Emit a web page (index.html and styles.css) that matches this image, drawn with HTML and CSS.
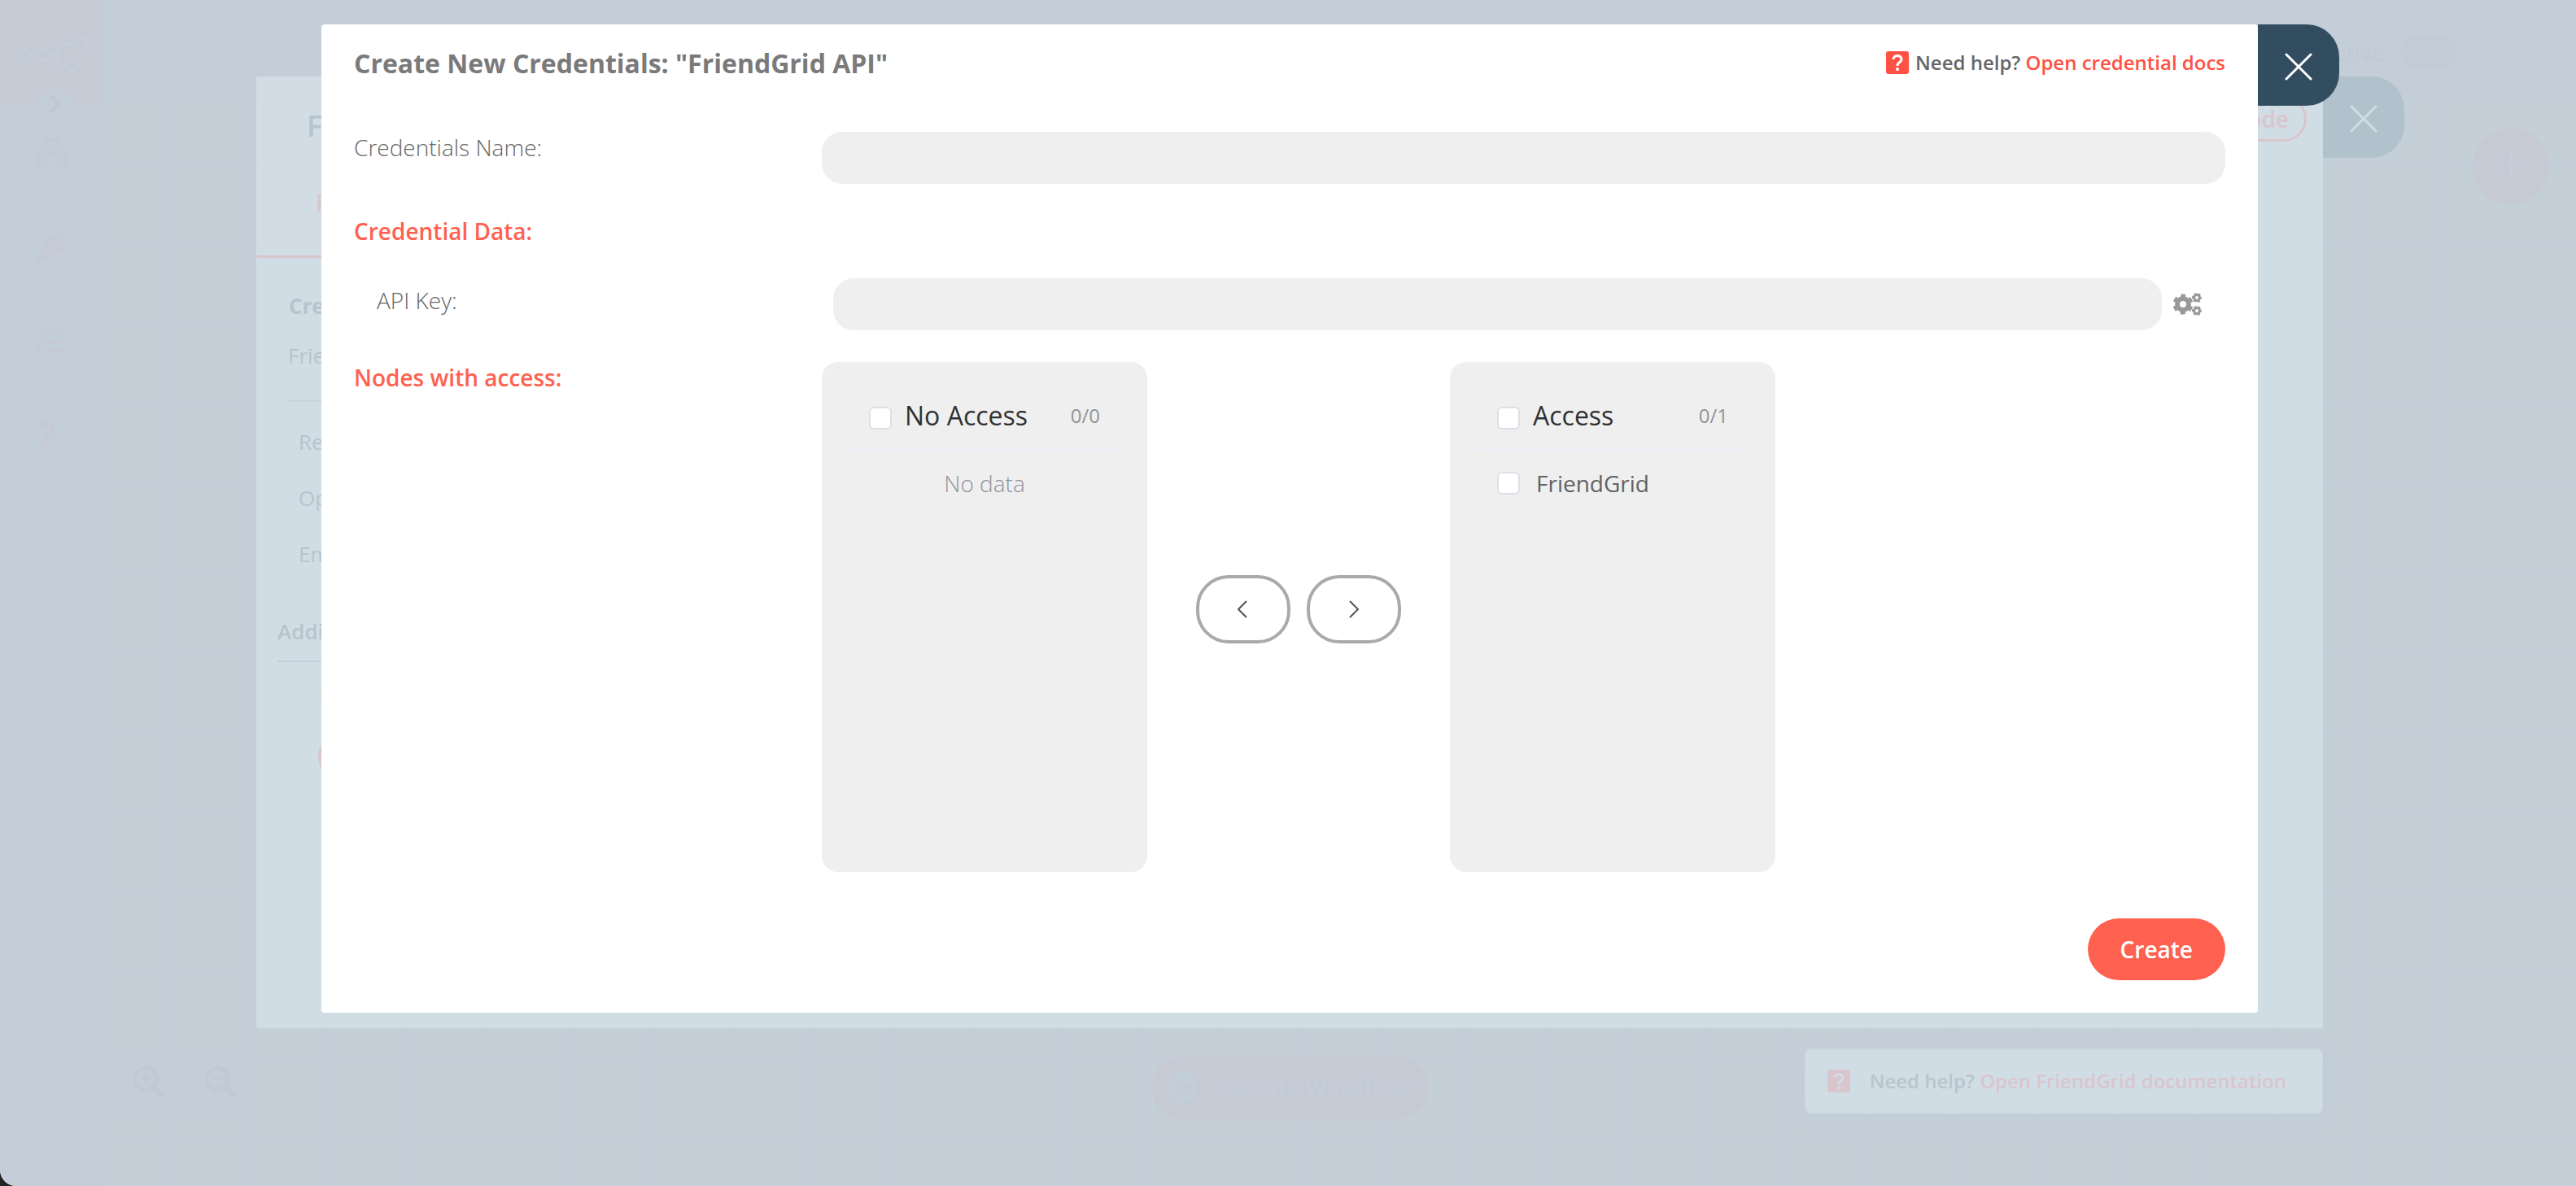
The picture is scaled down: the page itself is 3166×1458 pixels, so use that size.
FILE: index.html
```html
<!DOCTYPE html>
<html lang="en">
<head>
<meta charset="utf-8">
<meta name="viewport" content="width=device-width, initial-scale=1">
<title>Create New Credentials</title>
<link rel="stylesheet" href="styles.css">
</head>
<body>
<div class="app">
  <nav class="sidebar" aria-label="Main menu">
    <div class="brand">
      <svg class="brand-logo" viewBox="0 0 90 46" aria-hidden="true">
        <g fill="none" stroke="currentColor" stroke-width="5">
          <circle cx="9.500" cy="23" r="7"/><circle cx="35" cy="23" r="7"/><circle cx="81" cy="9.500" r="7"/><circle cx="71" cy="36.500" r="7"/>
          <path d="M17 23h11M43 23h4c10 0 4-13.500 15-13.500h12M47 23c10 0 4 13.500 13 13.500h4"/>
        </g>
      </svg>
    </div>
    <button class="collapse" type="button" aria-label="Expand menu">
      <svg width="16" height="22" viewBox="0 0 16 22" aria-hidden="true"><path d="M4 3l8 8-8 8" fill="none" stroke="currentColor" stroke-width="5" stroke-linecap="round"/></svg>
    </button>
    <ul class="menu">
      <li><a href="#workflows" aria-label="Workflows"><svg width="42" height="34" viewBox="0 0 42 34" aria-hidden="true"><g fill="none" stroke="currentColor" stroke-width="4"><path d="M14 2h12v8H14zM3 24h10v8H3zM27 24h10v8H27z"/><path d="M0 17.500h42M21 11v7M9 17v6M31 17v6" stroke-width="3"/></g></svg></a></li>
      <li><a href="#credentials" aria-label="Credentials"><svg width="34" height="34" viewBox="0 0 512 512" aria-hidden="true"><path fill="currentColor" d="M512 176c0 97-79 176-176 176-11 0-22-1-32-3l-24 27c-5 5-11 8-18 8h-38v40c0 13-11 24-24 24h-40v40c0 13-11 24-24 24H24c-13 0-24-11-24-24v-78c0-6 3-12 7-17l162-162c-6-17-9-36-9-55C160 79 239 0 336 0s176 79 176 176zM336 128a48 48 0 1 0 96 0 48 48 0 1 0-96 0z"/></svg></a></li>
      <li><a href="#executions" aria-label="Executions"><svg width="34" height="28" viewBox="0 0 34 28" aria-hidden="true"><g fill="none" stroke="currentColor" stroke-width="4"><path d="M13 4h20M13 14.500h20M13 25h20"/><path d="M1 3l3 3 5-6M1 14l3 3 5-6" stroke-width="3"/></g><circle cx="4" cy="25" r="3" fill="currentColor"/></svg></a></li>
      <li><a href="#help" aria-label="Help"><svg width="24" height="34" viewBox="0 0 24 34" aria-hidden="true"><path d="M3 8c3-4 6-5 9-5 9 0 10 8 5 12-3 2-5 3-6 7" fill="none" stroke="currentColor" stroke-width="6"/><circle cx="11" cy="29" r="4.500" fill="currentColor"/></svg></a></li>
    </ul>
  </nav>
  <header class="topbar">
    <label class="active-label" for="active">Active:</label>
    <input class="switch" type="checkbox" id="active">
  </header>
  <main class="canvas">
    <button class="add-node" type="button" aria-label="Add node">
      <svg width="36" height="36" viewBox="0 0 36 36" aria-hidden="true"><path d="M18 0v36M0 18h36" stroke="currentColor" stroke-width="2"/></svg>
    </button>
    <div class="canvas-bar">
      <div class="zoom-tools">
        <button class="tool" type="button" aria-label="Zoom in"><svg width="40" height="40" viewBox="0 0 40 40" aria-hidden="true"><g fill="none" stroke="currentColor"><circle cx="16" cy="16" r="13" stroke-width="5"/><path d="M25 26l12 11" stroke-width="6"/><path d="M16 9v14M9 16h14" stroke-width="4"/></g></svg></button>
        <button class="tool" type="button" aria-label="Zoom out"><svg width="40" height="40" viewBox="0 0 40 40" aria-hidden="true"><g fill="none" stroke="currentColor"><circle cx="16" cy="16" r="13" stroke-width="5"/><path d="M25 26l12 11" stroke-width="6"/><path d="M9 16h14" stroke-width="4"/></g></svg></button>
      </div>
      <button class="execute" type="button">
        <svg width="38" height="38" viewBox="0 0 38 38" aria-hidden="true"><circle cx="19" cy="19" r="19" fill="currentColor"/><path d="M12 12q0-3 3-1l13 6q2 2 0 4l-13 7q-3 1-3-2z" fill="#c5cad5"/></svg>
        Execute Workflow
      </button>
    </div>
  </main>
</div>

<div class="layer layer-node">
  <section class="node-panel" aria-label="FriendGrid node">
    <div class="node-settings">
      <div class="node-head">
        <h2 class="node-title">FriendGrid</h2>
        <a class="node-tab" href="#parameters">Parameters</a>
      </div>
      <h3 class="node-subtitle node-subtitle--credentials">Credentials</h3>
      <p class="node-credential">FriendGrid API</p>
      <ul class="node-fields">
        <li>Resource</li>
        <li>Operation</li>
        <li>Email</li>
      </ul>
      <h3 class="node-subtitle node-subtitle--extra">Additional Fields</h3>
      <p class="node-empty">Currently no items exist</p>
      <button class="node-add" type="button">Add Field</button>
    </div>
    <button class="node-run" type="button">Execute Node</button>
  </section>
  <button class="close close--faded" type="button" aria-label="Close node">
    <svg width="34" height="34" viewBox="0 0 34 34" aria-hidden="true"><path d="M2 2l30 30M32 2L2 32" stroke="currentColor" stroke-width="3" stroke-linecap="round"/></svg>
  </button>
  <p class="node-help">
    <svg class="help-icon" width="28" height="28" viewBox="0 0 28 28" aria-hidden="true"><rect width="28" height="28" rx="3" fill="#d9c5cd"/><path d="M9 10c0-6 10-6 10 0 0 4-5 3-5 8" fill="none" stroke="#d1dde4" stroke-width="3"/><circle cx="14" cy="22" r="2" fill="#d1dde4"/></svg>
    <span>Need help? <a href="#node-docs">Open FriendGrid documentation</a></span>
  </p>
</div>

<div class="layer layer-credentials">
  <form class="dialog" role="dialog" aria-labelledby="dialog-title">
    <header class="dialog-head">
      <h1 class="dialog-title" id="dialog-title">Create New Credentials: "FriendGrid API"</h1>
      <p class="dialog-help">
        <svg class="help-icon" width="28" height="28" viewBox="0 0 28 28" aria-hidden="true"><rect width="28" height="28" rx="3" fill="#ff5144"/><path d="M9 10c0-6 10-6 10 0 0 4-5 3-5 8" fill="none" stroke="#fff" stroke-width="3"/><circle cx="14" cy="22" r="2" fill="#fff"/></svg>
        <span>Need help? <a href="#credential-docs">Open credential docs</a></span>
      </p>
    </header>
    <div class="dialog-body">
      <div class="row">
        <label class="label" for="name">Credentials Name:</label>
        <input class="field" type="text" id="name">
      </div>
      <h2 class="section">Credential Data:</h2>
      <div class="row row--inset">
        <label class="label label--inset" for="key">API Key:</label>
        <div class="field-group">
          <input class="field" type="text" id="key">
          <button class="gears" type="button" aria-label="Parameter options">
            <svg width="36" height="30" viewBox="0 0 36 30" aria-hidden="true">
              <g fill="none" stroke="currentColor">
                <circle cx="12" cy="15" r="7" stroke-width="6"/>
                <circle cx="12" cy="15" r="10.500" stroke-width="4" stroke-dasharray="6 5" stroke-dashoffset="3" transform="rotate(-90 12 15)"/>
                <circle cx="29" cy="7" r="3.500" stroke-width="3"/>
                <circle cx="29" cy="7" r="5" stroke-width="2" stroke-dasharray="3 2.236" stroke-dashoffset="1.500"/>
                <circle cx="29" cy="23" r="3.500" stroke-width="3"/>
                <circle cx="29" cy="23" r="5" stroke-width="2" stroke-dasharray="3 2.236" stroke-dashoffset="1.500"/>
              </g>
            </svg>
          </button>
        </div>
      </div>
      <div class="row">
        <h2 class="section">Nodes with access:</h2>
        <div class="transfer">
          <section class="list">
            <div class="list-head">
              <input class="check" type="checkbox" id="all-none">
              <label class="list-title" for="all-none">No Access</label>
              <span class="count">0/0</span>
            </div>
            <p class="empty">No data</p>
          </section>
          <div class="transfer-buttons">
            <button class="move" type="button" aria-label="Move left"><svg width="14" height="22" viewBox="0 0 14 22" aria-hidden="true"><path d="M11 1L1 11l10 10" fill="none" stroke="currentColor" stroke-width="2"/></svg></button>
            <button class="move" type="button" aria-label="Move right"><svg width="14" height="22" viewBox="0 0 14 22" aria-hidden="true"><path d="M2 1l10 10L2 21" fill="none" stroke="currentColor" stroke-width="2"/></svg></button>
          </div>
          <section class="list">
            <div class="list-head">
              <input class="check" type="checkbox" id="all-access">
              <label class="list-title" for="all-access">Access</label>
              <span class="count">0/1</span>
            </div>
            <div class="list-item">
              <input class="check" type="checkbox" id="friendgrid">
              <label for="friendgrid">FriendGrid</label>
            </div>
          </section>
        </div>
      </div>
    </div>
    <footer class="dialog-foot">
      <button class="create" type="submit">Create</button>
    </footer>
  </form>
  <button class="close" type="button" aria-label="Close dialog">
    <svg width="34" height="34" viewBox="0 0 34 34" aria-hidden="true"><path d="M2 2l30 30M32 2L2 32" stroke="currentColor" stroke-width="3" stroke-linecap="round"/></svg>
  </button>
</div>
</body>
</html>
```

FILE: styles.css
```css
* {
  box-sizing: border-box;
}

body {
  margin: 0;
  background: #22221f;
  color: #666;
  font-family: "Open Sans", "Noto Sans", sans-serif;
  font-size: 28px;
  line-height: 38px;
}

h1, h2, h3, p, ul {
  margin: 0;
  padding: 0;
}

ul {
  list-style: none;
}

button, input {
  margin: 0;
  padding: 0;
  border: 0;
  font: inherit;
}

button {
  display: flex;
  align-items: center;
  justify-content: center;
  cursor: pointer;
}

a {
  color: inherit;
  text-decoration: none;
}

svg {
  display: block;
  flex: none;
}

/* Workflow editor, dimmed behind the dialogs */
.app {
  display: grid;
  grid-template-columns: 126px 1fr;
  grid-template-rows: 128px 1fr;
  min-height: 100vh;
  overflow: hidden;
  border-bottom-left-radius: 20px;
  background: #c4ced8;
}

.sidebar {
  position: relative;
  grid-row: 1 / 3;
  background: #c4ced9;
}

.brand {
  display: flex;
  align-items: center;
  justify-content: center;
  height: 128px;
  padding-top: 6px;
  background: #c5cad4;
  color: #c4ced9;
}

.brand-logo {
  width: 90px;
}

.collapse {
  position: absolute;
  top: 108px;
  left: 48px;
  width: 40px;
  height: 40px;
  border-radius: 50%;
  background: #c4ced8;
  color: #c0c9d1;
}

.menu {
  display: flex;
  flex-direction: column;
  gap: 84px;
  padding: 42px 0 0 44px;
  color: #c5cad4;
}

.topbar {
  display: flex;
  align-items: center;
  justify-content: flex-end;
  gap: 12px;
  padding-right: 146px;
  color: #c1cad4;
}

.switch {
  appearance: none;
  width: 70px;
  height: 40px;
  border-radius: 20px;
  background: #c3ccd6;
}

.canvas {
  display: flex;
  flex-direction: column;
  align-items: flex-end;
  justify-content: space-between;
  padding: 30px 0 82px;
  background-color: #c5cfd8;
  background-image:
    linear-gradient(to right, #c4ced8 2px, transparent 2px),
    linear-gradient(to bottom, #c4ced8 2px, transparent 2px);
  background-position: 72px 70px;
  background-size: 100px 100px;
}

.add-node {
  width: 94px;
  height: 94px;
  margin-right: 33px;
  border-radius: 50%;
  background: #c5cad4;
  color: #c5ced9;
}

.canvas-bar {
  display: grid;
  grid-template-columns: 1fr auto 1fr;
  align-items: end;
  width: 100%;
  padding: 0 140px 0 17px;
}

.zoom-tools {
  display: flex;
  gap: 8px;
  padding-bottom: 6px;
}

.tool {
  width: 80px;
  height: 80px;
  border-radius: 4px;
  background: #c4cdd8;
  color: #c1cad4;
}

.execute {
  gap: 18px;
  width: 340px;
  height: 78px;
  border-radius: 39px;
  background: #c5cad5;
  color: #c4ced9;
  font-weight: 600;
}

/* Full-window layers that carry the two dialogs */
.layer {
  position: absolute;
  inset: 0;
  display: flex;
  align-items: flex-start;
}

.layer-node {
  padding: 94px 211px 194px 315px;
}

.layer-credentials {
  padding: 30px 291px 0 395px;
}

.close {
  flex: none;
  width: 100px;
  height: 100px;
  padding-top: 3px;
  border-radius: 0 40px 40px 0;
  background: #314d5f;
  color: #fff;
}

.close--faded {
  background: #b2c2cd;
  color: #d1dde4;
}

.help-icon {
  width: 28px;
}

.node-panel {
  display: flex;
  flex: 1;
  align-items: flex-start;
  justify-content: space-between;
  height: 100%;
  padding-right: 20px;
  overflow: hidden;
  border-bottom-left-radius: 4px;
  background: #d0dde4;
  color: #b7c4cd;
  font-size: 26px;
}

.node-settings {
  width: 720px;
}

.node-head {
  display: flex;
  flex-direction: column;
  gap: 50px;
  height: 223px;
  padding: 36px 0 0 62px;
  border-bottom: 3px solid #d9c5cc;
  background: #d2dce4;
}

.node-title {
  font-size: 36px;
  font-weight: 600;
  line-height: 50px;
}

.node-tab {
  padding-left: 11px;
  color: #d9c5cc;
  font-size: 28px;
  font-weight: 600;
}

.node-subtitle {
  font-size: 26px;
  font-weight: 600;
}

.node-subtitle--credentials {
  padding: 40px 0 0 40px;
  font-weight: 700;
}

.node-credential {
  margin: 23px 0 0 39px;
  padding-bottom: 36px;
  border-bottom: 2px solid #c8d3dc;
}

.node-fields {
  display: flex;
  flex-direction: column;
  gap: 31px;
  padding: 30px 0 0 52px;
}

.node-subtitle--extra {
  margin: 57px 0 0 26px;
  padding-bottom: 17px;
  border-bottom: 2px solid #c1ced7;
}

.node-empty {
  padding: 20px 0 0 78px;
}

.node-add {
  width: 300px;
  height: 60px;
  margin: 28px 0 0 76px;
  border-radius: 30px;
  background: #d9c5cc;
  color: #d1dde4;
}

.node-run {
  width: 230px;
  height: 56px;
  margin-top: 24px;
  border: 3px solid #d9c5cc;
  border-radius: 28px;
  background: transparent;
  color: #d9c5cc;
  font-size: 28px;
  font-weight: 600;
}

.node-help {
  position: absolute;
  right: 311px;
  bottom: 89px;
  display: flex;
  align-items: center;
  gap: 24px;
  height: 80px;
  padding: 0 43px 0 26px;
  border: 2px solid #cddae2;
  border-radius: 8px;
  background: #d1dde4;
  box-shadow: 0 4px 20px #c1cbd6;
  color: #b8c5cd;
  font-size: 24px;
  font-weight: 600;
}

.node-help a {
  color: #d9c5cd;
}

/* Credentials dialog */
.dialog {
  flex: 1;
  padding: 26px 40px 40px;
  border-radius: 4px;
  background: #fff;
}

.dialog-head {
  display: flex;
  align-items: flex-start;
  justify-content: space-between;
  margin-bottom: 62px;
}

.dialog-title {
  color: #7a7a7a;
  font-size: 32px;
  font-weight: 700;
  line-height: 44px;
}

.dialog-help {
  display: flex;
  align-items: center;
  gap: 8px;
  font-size: 24px;
  font-weight: 600;
  line-height: 42px;
}

.dialog-help a {
  color: #ff5144;
}

.dialog-body {
  display: flex;
  flex-direction: column;
  gap: 39px;
}

.row {
  display: grid;
  grid-template-columns: 1fr 3fr;
}

.row--inset {
  padding: 0 28px;
}

.label {
  font-weight: 300;
}

.label--inset {
  padding-top: 8px;
}

.field {
  width: 100%;
  height: 64px;
  padding: 0 24px;
  border-radius: 25px;
  background: #efefef;
  color: #555;
}

.field-group {
  display: flex;
}

.gears {
  flex: none;
  width: 50px;
  justify-content: flex-end;
  background: transparent;
  color: #999;
}

.section {
  color: #ff6150;
  font-size: 28px;
  font-weight: 600;
}

.transfer {
  display: flex;
  gap: 60px;
}

.list {
  width: 400px;
  min-height: 627px;
  padding: 0 28px;
  border-radius: 20px;
  background: #efefef;
}

.list-head {
  display: flex;
  align-items: center;
  gap: 16px;
  padding: 44px 30px 18px;
  border-bottom: 2px solid #ebeef5;
}

.list-title {
  flex: 1;
  color: #303133;
  font-size: 32px;
  line-height: 44px;
}

.count {
  color: #909399;
  font-size: 24px;
  line-height: 32px;
}

.check {
  appearance: none;
  flex: none;
  width: 28px;
  height: 28px;
  border: 2px solid #dcdfe6;
  border-radius: 6px;
  background: #fff;
}

.list-head .check {
  margin-top: 6px;
}

.list-item {
  display: flex;
  align-items: center;
  gap: 20px;
  padding: 22px 30px 0;
  color: #606266;
}

.empty {
  padding-top: 22px;
  color: #909399;
  font-weight: 300;
  text-align: center;
}

.transfer-buttons {
  display: flex;
  align-items: center;
  gap: 20px;
  padding-bottom: 20px;
}

.move {
  width: 116px;
  height: 84px;
  border: 4px solid #aaa;
  border-radius: 40px;
  background: #fff;
  color: #555;
}

.dialog-foot {
  display: flex;
  justify-content: flex-end;
  margin-top: 57px;
}

.create {
  padding: 19px 40px;
  border-radius: 38px;
  background: #ff6150;
  color: #fff;
  font-weight: 600;
}
```
